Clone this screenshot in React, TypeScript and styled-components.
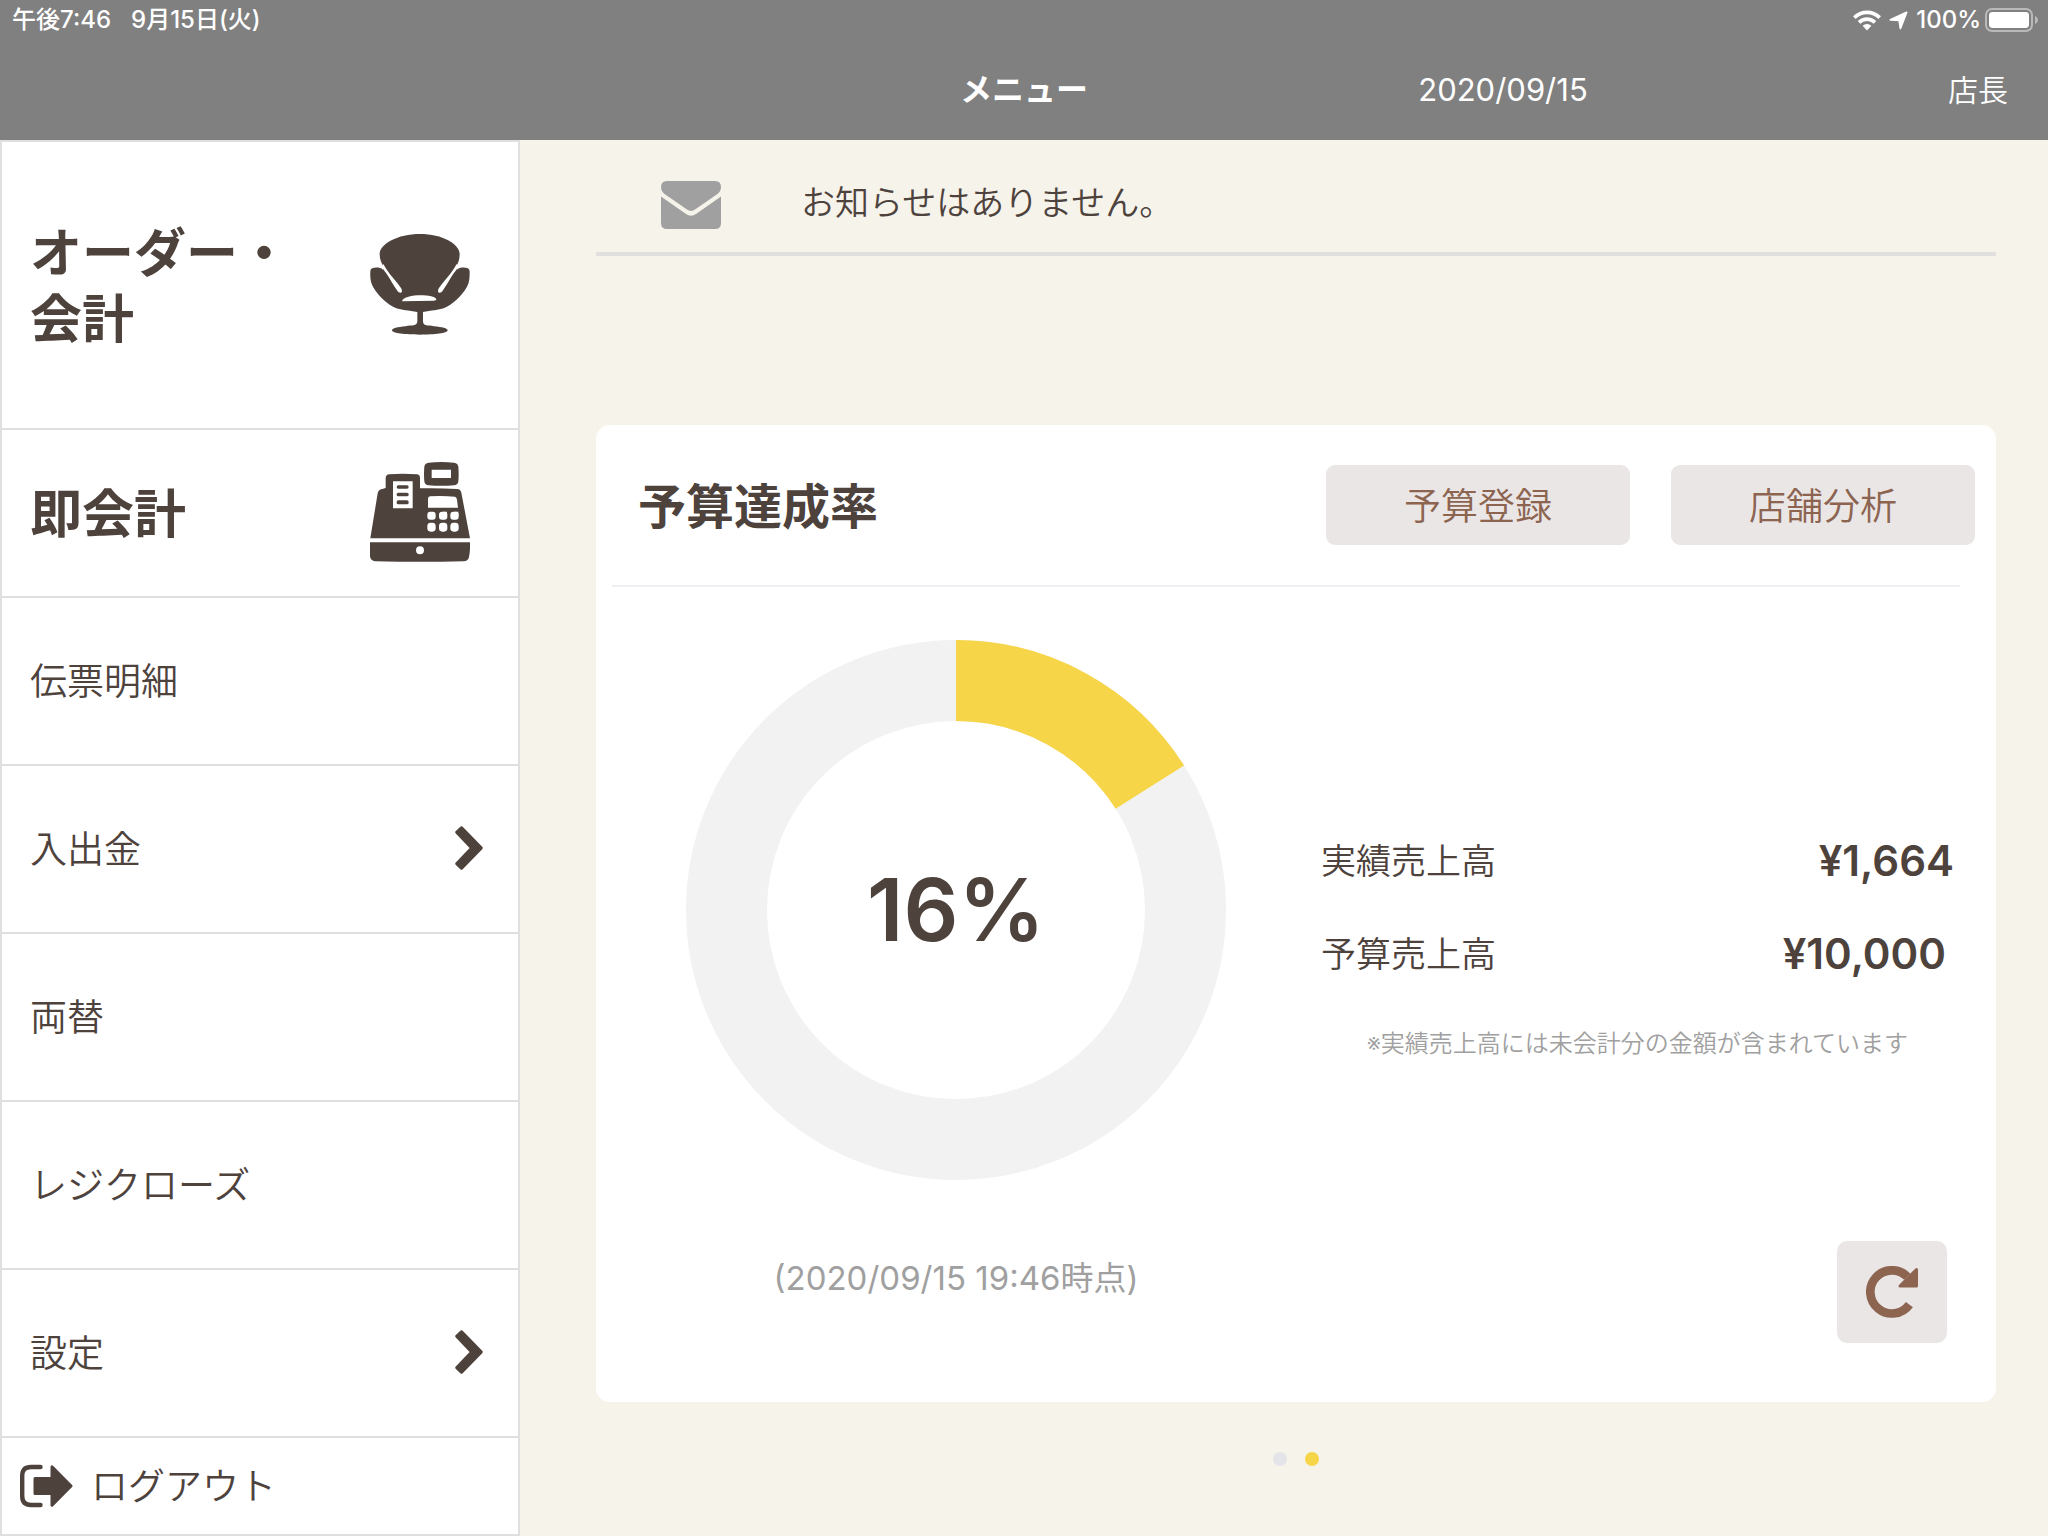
import React from 'react';
import styled, { createGlobalStyle } from 'styled-components';

const color = {
  bar: '#808080',
  page: '#f6f3eb',
  ink: '#4e423d',
  accent: '#8c6450',
  soft: '#eae6e6',
  line: '#dfdfdf',
  muted: '#a0a0a0',
  yellow: '#f7d548',
  track: '#f2f2f2',
};

const weight = {
  text: 350,
  strong: 700,
};

const GlobalStyle = createGlobalStyle`
  *, *::before, *::after { box-sizing: border-box; }
  body {
    margin: 0;
    background: ${color.page};
    color: ${color.ink};
    font-family: Inter, "Noto Sans CJK JP", sans-serif;
  }
  button { font: inherit; color: inherit; border: 0; margin: 0; cursor: pointer; }
  h1, h2, p, dl, dt, dd, ul { margin: 0; padding: 0; }
  svg { display: block; flex: none; }
`;

const Page = styled.div`
  display: flex;
  flex-direction: column;
  min-height: 100vh;
`;

const TopBar = styled.header`
  background: ${color.bar};
  color: #fff;
`;

const StatusBar = styled.div`
  display: flex;
  justify-content: space-between;
  align-items: center;
  height: 40px;
  padding: 0 9px 0 12px;
  font-size: 24px;
  font-weight: 500;
  line-height: 40px;
`;

const StatusGroup = styled.div<{ $gap: number }>`
  display: flex;
  align-items: center;
  gap: ${(p) => p.$gap}px;
`;

const TitleBar = styled.div`
  display: grid;
  grid-template-columns: 1fr auto 1fr;
  align-items: center;
  height: 100px;
  padding: 0 40px;
  line-height: 100px;
`;

const Title = styled.h1`
  grid-column: 2;
  font-size: 32px;
  font-weight: ${weight.strong};
`;

const TitleSide = styled.div`
  display: flex;
`;

const BusinessDate = styled.time`
  flex: 1;
  padding-right: 30px;
  font-size: 31px;
  text-align: center;
`;

const StaffName = styled.span`
  font-size: 30px;
  font-weight: ${weight.text};
`;

const Body = styled.div`
  display: flex;
  flex: 1;
`;

const Sidebar = styled.nav`
  width: 520px;
  flex: none;
  border: 2px solid ${color.line};
  background: #fff;
`;

const MenuButton = styled.button<{ $height: number; $strong?: boolean; $inset: number }>`
  display: flex;
  align-items: center;
  justify-content: space-between;
  width: 100%;
  min-height: ${(p) => p.$height}px;
  padding: 0 ${(p) => p.$inset}px 0 28px;
  border-bottom: 2px solid ${color.line};
  background: none;
  text-align: left;
  font-size: ${(p) => (p.$strong ? 52 : 37)}px;
  font-weight: ${(p) => (p.$strong ? weight.strong : weight.text)};
  line-height: ${(p) => (p.$strong ? 66 : 56)}px;
`;

const MenuLabel = styled.span<{ $strong?: boolean }>`
  padding-top: ${(p) => (p.$strong ? 4 : 2)}px;
`;

const LogoutButton = styled.button`
  display: flex;
  align-items: center;
  gap: 18px;
  width: 100%;
  min-height: 96px;
  padding: 0 18px;
  background: none;
  font-size: 37px;
  font-weight: ${weight.text};
  line-height: 56px;
`;

const Main = styled.main`
  flex: 1;
  min-width: 0;
  padding: 0 52px 0 76px;
`;

const Notice = styled.section`
  display: flex;
  align-items: center;
  gap: 80px;
  height: 116px;
  padding: 18px 0 0 65px;
  border-bottom: 4px solid ${color.line};
`;

const NoticeText = styled.p`
  padding-bottom: 10px;
  font-size: 34px;
  font-weight: ${weight.text};
`;

const Card = styled.section`
  margin-top: 169px;
  border-radius: 14px;
  background: #fff;
`;

const CardHeader = styled.div`
  display: flex;
  align-items: center;
  gap: 41px;
  padding: 40px 21px 40px 42px;
`;

const CardTitle = styled.h2`
  flex: 1;
  padding-top: 4px;
  font-size: 48px;
  font-weight: ${weight.strong};
  line-height: 76px;
`;

const ActionButton = styled.button`
  width: 304px;
  height: 80px;
  padding: 0 0 2px;
  border-radius: 9px;
  background: ${color.soft};
  color: ${color.accent};
  font-size: 37px;
  font-weight: ${weight.text};
`;

const Rule = styled.hr`
  height: 2px;
  margin: 0 36px 0 16px;
  border: 0;
  background: #eeeef3;
`;

const CardBody = styled.div`
  display: grid;
  grid-template-columns: 720fr 680fr;
  row-gap: 61px;
  padding: 53px 0 59px;
`;

const ChartCell = styled.div`
  display: grid;
  place-items: center;
`;

const ChartLabel = styled.strong`
  grid-area: 1 / 1;
  font-size: 86px;
  font-weight: 600;
  line-height: 96px;
`;

const Donut = styled.svg`
  grid-area: 1 / 1;
`;

const Figures = styled.div`
  align-self: center;
  padding: 72px 42px 0 5px;
`;

const FigureList = styled.dl`
  display: flex;
  flex-direction: column;
  gap: 33px;
`;

const FigureRow = styled.div<{ $inset: number }>`
  display: flex;
  justify-content: space-between;
  align-items: center;
  padding-right: ${(p) => p.$inset}px;
  line-height: 60px;
`;

const FigureName = styled.dt`
  font-size: 35px;
  font-weight: ${weight.text};
`;

const FigureValue = styled.dd`
  font-size: 42px;
  font-weight: 600;
`;

const Note = styled.p`
  margin-top: 42px;
  color: ${color.muted};
  font-size: 24px;
  font-weight: ${weight.text};
  line-height: 36px;
  text-align: center;
`;

const AsOf = styled.p`
  padding-top: 13px;
  color: ${color.muted};
  font-size: 33px;
  line-height: 48px;
  text-align: center;
`;

const RefreshButton = styled.button`
  display: grid;
  place-items: center;
  justify-self: end;
  width: 110px;
  height: 102px;
  margin-right: 49px;
  padding: 0;
  border-radius: 10px;
  background: ${color.soft};
  color: ${color.accent};
`;

const Pager = styled.div`
  display: flex;
  justify-content: center;
  gap: 18px;
  padding-top: 50px;
`;

const Dot = styled.button<{ $active?: boolean }>`
  width: 14px;
  height: 14px;
  padding: 0;
  border-radius: 50%;
  background: ${(p) => (p.$active ? color.yellow : '#e4e3e9')};
`;

const WifiIcon = () => (
  <svg width="28" height="21" viewBox="0 0 28 21" aria-hidden="true">
    <g fill="none" stroke="#fff" strokeWidth="3.6">
      <path d="M1.3 7.6a18 18 0 0 1 25.4 0" />
      <path d="M6 12.4a11.4 11.4 0 0 1 16 0" />
    </g>
    <path fill="#fff" d="M9.6 15.8a6.4 6.4 0 0 1 8.8 0L14 20.6z" />
  </svg>
);

const LocationIcon = () => (
  <svg width="19" height="19" viewBox="0 0 19 19" aria-hidden="true">
    <path
      d="M17.6 1.4 11.4 17.4 10.200 9.400 1.4 8.8z"
      fill="#fff"
      stroke="#fff"
      strokeWidth="1.8"
      strokeLinejoin="round"
    />
  </svg>
);

const BatteryIcon = () => (
  <svg width="54" height="24" viewBox="0 0 54 24" aria-hidden="true">
    <rect x="1" y="1" width="46" height="22" rx="6" fill="none" stroke="#b9b9b9" strokeWidth="2" />
    <rect x="4" y="4" width="40" height="16" rx="3.4" fill="#fff" />
    <path d="M50 8c4 1.4 4 6.600 0 8z" fill="#b9b9b9" />
  </svg>
);

const ChairIcon = () => (
  <svg width="100" height="102" viewBox="89 100 300 306" aria-hidden="true">
    <path
      fill={color.ink}
      d="M239 100C172 100 118 130 118 160C118 176 123 187 131 200L128 207C121 201 112 200 104 201C95 201 90 204 90 214C89 232 91 246 98 258C112 284 142 312 168 323C182 328 206 330 231 334V362C231 377 214 373 196 377C172 379 155 383 155 389C155 398 195 402 239 402C283 402 322 398 322 389C322 383 305 379 281 377C263 373 248 377 248 362V334C272 330 296 328 310 323C336 312 366 284 380 258C387 246 388 232 388 214C388 204 383 201 374 201C366 200 357 201 350 207L346 200C354 187 358 176 358 160C358 130 306 100 239 100Z"
    />
    <g fill="#fff">
      <path d="M125 196L130 208C143 222 156 250 171 270C175 277 185 279 185 270C184 262 176 255 169 245C155 227 140 212 129 190Z" />
      <path d="M352 196L348 208C335 222 322 250 307 270C303 277 293 279 293 270C294 262 302 255 309 245C323 227 338 212 349 190Z" />
      <path d="M185 302C190 279 282 279 288 296C288 299 285 300 280 300Z" />
    </g>
  </svg>
);

const RegisterIcon = () => (
  <svg width="100" height="102" viewBox="90 785 300 306" aria-hidden="true">
    <g fill={color.ink}>
      <path d="M91 1014L113 879Q116 867 126 866Q134 865 137 862V834Q137 823 148 822Q189 819 230 822Q240 823 240 833V864Q300 863 351 866Q362 867 364 877L390 1014Z" />
      <path
        fillRule="evenodd"
        d="M266 787Q304 783 342 787Q354 788 355 799Q357 821 355 843Q354 854 342 855Q304 858 266 855Q254 854 253 843Q251 821 253 799Q254 788 266 787ZM275 808V833H333V808Z"
      />
      <path d="M90 1026H390Q391 1050 387 1070Q385 1082 371 1083Q240 1086 106 1083Q91 1082 90 1068Z" />
    </g>
    <path fill="#fff" d="M159 843H218V924H159ZM270 888Q308 886 345 889Q350 890 351 898L354 922H264V896Q264 889 270 888Z" />
    <g fill={color.ink}>
      <rect x="170" y="855" width="36" height="10" rx="5" />
      <rect x="170" y="877" width="36" height="11" rx="5" />
      <rect x="170" y="900" width="36" height="12" rx="5" />
    </g>
    <g fill="#fff">
      {[262, 297, 331].map((x) => (
        <React.Fragment key={x}>
          <rect x={x} y="934" width="25" height="24" rx="9" />
          <rect x={x} y="967" width="25" height="27" rx="10" />
        </React.Fragment>
      ))}
      <path d="M310 934H321V946ZM344 934H355V946Z" />
      <circle cx="240" cy="1050" r="12" />
    </g>
  </svg>
);

const ChevronIcon = () => (
  <svg width="28" height="46" viewBox="0 0 28 46" aria-hidden="true">
    <path
      d="M6.500 2 26 22 6.500 42 2 37.700 17 22 2 6.300z"
      fill={color.ink}
      stroke={color.ink}
      strokeWidth="3.400"
      strokeLinejoin="round"
    />
  </svg>
);

const LogoutIcon = () => (
  <svg width="53" height="44" viewBox="0 0 53 44" aria-hidden="true">
    <path d="M20.500 3H11Q2.200 3 2.200 12V32Q2.200 41 11 41H20.500" fill="none" stroke={color.ink} strokeWidth="4.400" strokeLinecap="round" />
    <path
      d="M32 2.800 51 22 32 41.200V29.500H15V14.500H32z"
      fill={color.ink}
      stroke={color.ink}
      strokeWidth="3"
      strokeLinejoin="round"
    />
  </svg>
);

const MailIcon = () => (
  <svg width="60" height="48" viewBox="0 0 60 48" aria-hidden="true">
    <g fill={color.muted}>
      <path d="M6 0H54Q60 0 60 6C60 10 58 12 55 14L34 28.600Q30 31.500 26 28.600L5 14C2 12 0 10 0 6Q0 0 6 0Z" />
      <path d="M0 15.500L25 33Q30 36.500 35 33L60 15.500V42Q60 48 54 48H6Q0 48 0 42Z" />
    </g>
  </svg>
);

const RefreshIcon = () => (
  <svg width="52" height="52" viewBox="0 0 52 52" aria-hidden="true">
    <path d="M41.300 10.700A21.600 21.600 0 1 0 43.400 38.600" fill="none" stroke="currentColor" strokeWidth="8.700" />
    <path d="M50.500 3.500V20H34z" fill="currentColor" stroke="currentColor" strokeWidth="3" strokeLinejoin="round" />
  </svg>
);

const RADIUS = 229.5;
const LENGTH = 2 * Math.PI * RADIUS;

const RateChart = ({ percent }: { percent: number }) => (
  <ChartCell>
    <Donut width="540" height="540" viewBox="0 0 540 540" aria-hidden="true">
      <g fill="none" strokeWidth="81" transform="rotate(-90 270 270)">
        <circle cx="270" cy="270" r={RADIUS} stroke={color.track} />
        <circle
          cx="270"
          cy="270"
          r={RADIUS}
          stroke={color.yellow}
          strokeDasharray={`${(LENGTH * percent) / 100} ${LENGTH}`}
        />
      </g>
    </Donut>
    <ChartLabel>{percent}%</ChartLabel>
  </ChartCell>
);

const items = [
  { label: '伝票明細' },
  { label: '入出金', nested: true },
  { label: '両替' },
  { label: 'レジクローズ' },
  { label: '設定', nested: true },
];

export default function App() {
  return (
    <Page>
      <GlobalStyle />
      <TopBar>
        <StatusBar>
          <StatusGroup $gap={20}>
            <span>午後7:46</span>
            <span>9月15日(火)</span>
          </StatusGroup>
          <StatusGroup $gap={8}>
            <WifiIcon />
            <LocationIcon />
            <StatusGroup $gap={4}>
              <span>100%</span>
              <BatteryIcon />
            </StatusGroup>
          </StatusGroup>
        </StatusBar>
        <TitleBar>
          <Title>メニュー</Title>
          <TitleSide>
            <BusinessDate dateTime="2020-09-15">2020/09/15</BusinessDate>
            <StaffName>店長</StaffName>
          </TitleSide>
        </TitleBar>
      </TopBar>
      <Body>
        <Sidebar>
          <MenuButton type="button" $height={288} $strong $inset={48}>
            <MenuLabel $strong>オーダー・<br />会計</MenuLabel>
            <ChairIcon />
          </MenuButton>
          <MenuButton type="button" $height={168} $strong $inset={48}>
            <MenuLabel $strong>即会計</MenuLabel>
            <RegisterIcon />
          </MenuButton>
          {items.map((item) => (
            <MenuButton type="button" key={item.label} $height={168} $inset={35}>
              <MenuLabel>{item.label}</MenuLabel>
              {item.nested && <ChevronIcon />}
            </MenuButton>
          ))}
          <LogoutButton type="button">
            <LogoutIcon />
            <MenuLabel>ログアウト</MenuLabel>
          </LogoutButton>
        </Sidebar>
        <Main>
          <Notice>
            <MailIcon />
            <NoticeText>お知らせはありません。</NoticeText>
          </Notice>
          <Card>
            <CardHeader>
              <CardTitle>予算達成率</CardTitle>
              <ActionButton type="button">予算登録</ActionButton>
              <ActionButton type="button">店舗分析</ActionButton>
            </CardHeader>
            <Rule />
            <CardBody>
              <RateChart percent={16} />
              <Figures>
                <FigureList>
                  <FigureRow $inset={0}>
                    <FigureName>実績売上高</FigureName>
                    <FigureValue>¥1,664</FigureValue>
                  </FigureRow>
                  <FigureRow $inset={8}>
                    <FigureName>予算売上高</FigureName>
                    <FigureValue>¥10,000</FigureValue>
                  </FigureRow>
                </FigureList>
                <Note>※実績売上高には未会計分の金額が含まれています</Note>
              </Figures>
              <AsOf>(2020/09/15 19:46時点)</AsOf>
              <RefreshButton type="button" aria-label="更新">
                <RefreshIcon />
              </RefreshButton>
            </CardBody>
          </Card>
          <Pager>
            <Dot type="button" aria-label="1ページ目" />
            <Dot type="button" aria-label="2ページ目" $active />
          </Pager>
        </Main>
      </Body>
    </Page>
  );
}
